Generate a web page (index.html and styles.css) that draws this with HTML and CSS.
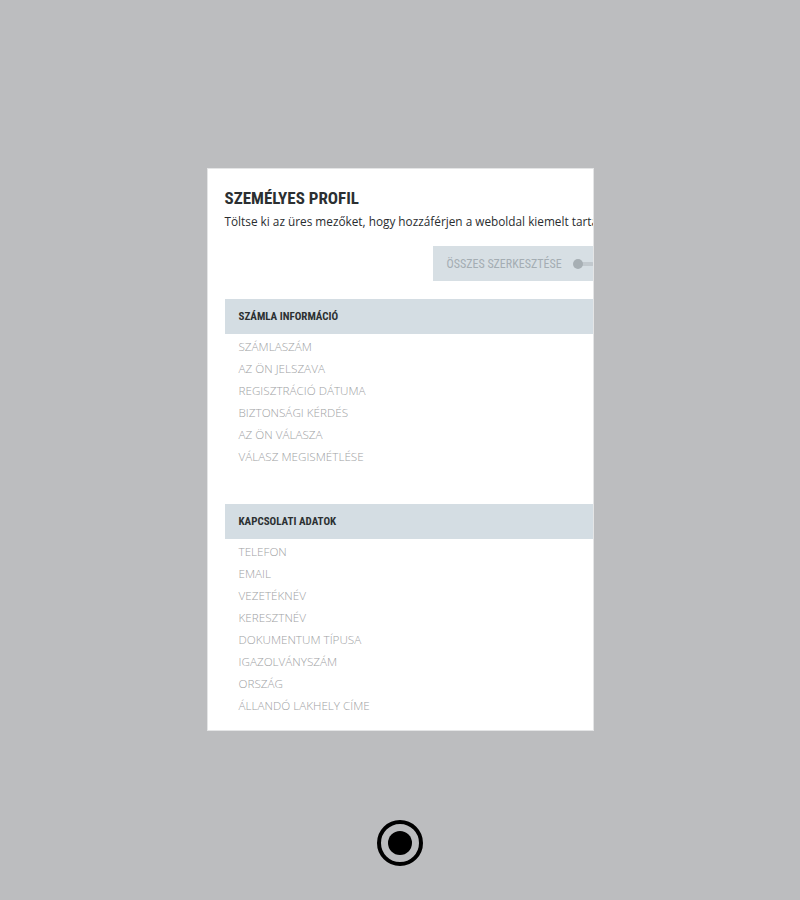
FILE: index.html
```html
<!DOCTYPE html>
<html lang="hu">
<head>
<meta charset="utf-8">
<title>Személyes profil</title>
<link rel="stylesheet" href="styles.css">
</head>
<body>
<div class="page">
  <div class="card">
    <div class="inner">
      <h1 class="title">SZEMÉLYES PROFIL</h1>
      <p class="subtitle">Töltse ki az üres mezőket, hogy hozzáférjen a weboldal kiemelt tartalmaihoz.</p>
      <div class="actions">
        <div class="edit-btn">
          <span class="edit-label">ÖSSZES SZERKESZTÉSE</span>
          <span class="toggle"><span class="knob"></span></span>
        </div>
      </div>
      <div class="section">
        <div class="section-head">SZÁMLA INFORMÁCIÓ</div>
        <ul class="fields">
          <li>SZÁMLASZÁM</li>
          <li>AZ ÖN JELSZAVA</li>
          <li>REGISZTRÁCIÓ DÁTUMA</li>
          <li>BIZTONSÁGI KÉRDÉS</li>
          <li>AZ ÖN VÁLASZA</li>
          <li>VÁLASZ MEGISMÉTLÉSE</li>
        </ul>
      </div>
      <div class="section second">
        <div class="section-head">KAPCSOLATI ADATOK</div>
        <ul class="fields">
          <li>TELEFON</li>
          <li>EMAIL</li>
          <li>VEZETÉKNÉV</li>
          <li>KERESZTNÉV</li>
          <li>DOKUMENTUM TÍPUSA</li>
          <li>IGAZOLVÁNYSZÁM</li>
          <li>ORSZÁG</li>
          <li>ÁLLANDÓ LAKHELY CÍME</li>
        </ul>
      </div>
    </div>
  </div>
  <div class="radio" aria-label="kiválasztva">
    <svg width="48" height="48" viewBox="0 0 48 48">
      <circle cx="24" cy="24" r="21" fill="none" stroke="#000" stroke-width="4"/>
      <circle cx="24" cy="24" r="12" fill="#000"/>
    </svg>
  </div>
</div>
</body>
</html>
```

FILE: styles.css
```css
html, body {
  margin: 0;
  padding: 0;
}
body {
  background: #bcbdbf;
  font-family: "Open Sans", "Liberation Sans", sans-serif;
}
.page {
  width: 800px;
  height: 900px;
  display: flex;
  flex-direction: column;
  align-items: center;
}
.card {
  margin-top: 168px;
  width: 387px;
  height: 563px;
  background: #fff;
  overflow: hidden;
  box-sizing: border-box;
  border: 1px solid #e4e5e6;
}
.inner {
  width: 520px;
  padding: 17px 0 0 17px;
}
.title {
  margin: 0;
  font-family: "Liberation Sans Narrow", "Roboto Condensed", Roboto, sans-serif;
  font-weight: bold;
  font-size: 17px;
  line-height: 24px;
  color: #2b2f31;
}
.subtitle {
  margin: 2px 0 0;
  font-size: 11.8px;
  line-height: 18px;
  color: #2a2d2f;
  white-space: nowrap;
}
.actions {
  display: flex;
  padding-left: 208px;
  margin-top: 16px;
}
.edit-btn {
  width: 200px;
  height: 35px;
  background: #d7dfe4;
  display: flex;
  align-items: center;
  padding-left: 14px;
  box-sizing: border-box;
}
.edit-label {
  font-family: "Liberation Sans Narrow", "Roboto Condensed", Roboto, sans-serif;
  font-size: 12px;
  color: #a4adb3;
}
.toggle {
  margin-left: 12px;
  width: 20px;
  height: 4px;
  border-radius: 2px;
  background: #c2c9ce;
  position: relative;
  display: inline-block;
}
.knob {
  position: absolute;
  left: -1px;
  top: -3px;
  width: 10px;
  height: 10px;
  border-radius: 50%;
  background: #a7afb4;
}
.section {
  margin-top: 18px;
}
.section.second {
  margin-top: 37px;
}
.section-head {
  height: 35px;
  background: #d4dde3;
  display: flex;
  align-items: center;
  padding-left: 14px;
  font-family: "Liberation Sans Narrow", "Roboto Condensed", Roboto, sans-serif;
  font-weight: bold;
  font-size: 11px;
  color: #2c3032;
}
.fields {
  list-style: none;
  margin: 0;
  padding: 1px 0 0 14px;
}
.fields li {
  font-size: 11.7px;
  font-weight: 300;
  line-height: 22px;
  color: #a0a2a4;
}
.radio {
  margin-top: 88px;
  width: 48px;
  height: 48px;
}
.radio svg {
  display: block;
}
```
